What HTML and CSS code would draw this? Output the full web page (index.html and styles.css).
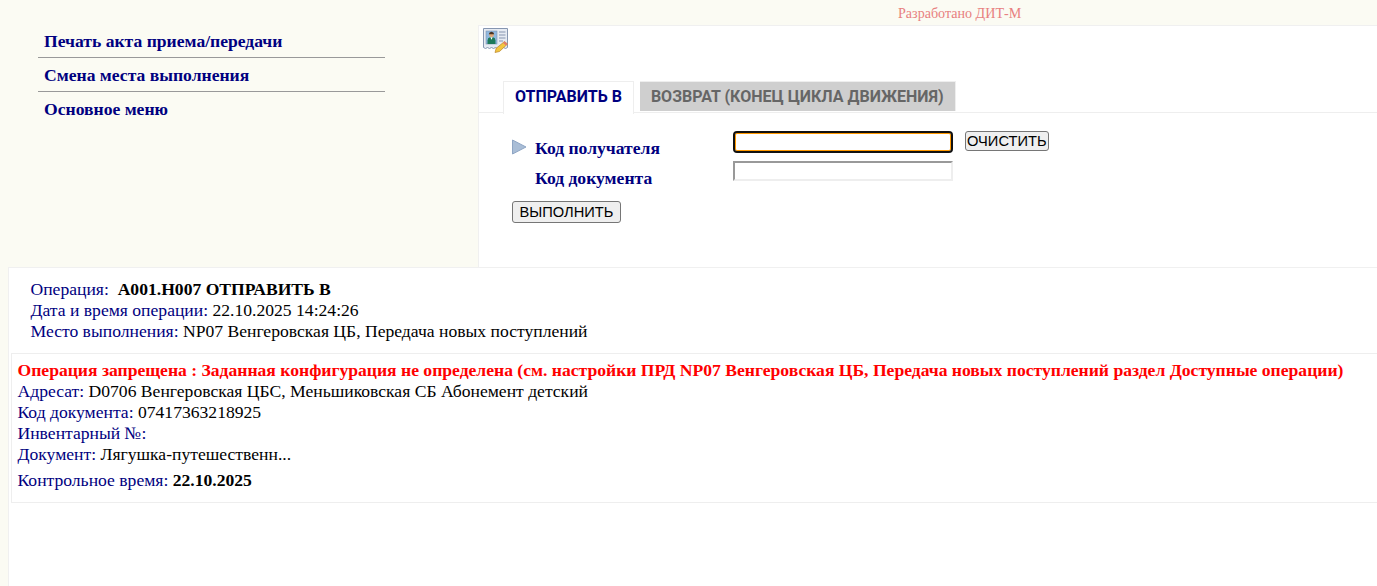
FILE: index.html
```html
<!DOCTYPE html>
<html lang="ru">
<head>
    <meta charset="UTF-8">
    <title>Операция</title>
    <link rel="stylesheet" href="styles.css">
</head>
<body>
    <div class="header"><span class="dev">Разработано ДИТ-М</span></div>
    <div class="top">
        <div class="menu">
            <a class="menu-item" href="#">Печать акта приема/передачи</a>
            <a class="menu-item" href="#">Смена места выполнения</a>
            <a class="menu-item" href="#">Основное меню</a>
        </div>
        <div class="work">
            <svg class="card-icon" width="28" height="26" viewBox="0 0 28 26">
                <path d="M1.500 1.500h24v19l-2 1-2-1-2 1-2-1-2 1-2-1-2 1-2-1-2 1-2-1-2 1-2-1z" fill="#e6ebf3" stroke="#8696b0"/>
                <rect x="4" y="4" width="11" height="13" fill="#8fb8e0" stroke="#7f93b0" stroke-width=".6"/>
                <circle cx="9.500" cy="7.800" r="2.400" fill="#e0a878"/>
                <path d="M9.500 4.800a2.800 2.800 0 0 1 2.700 2.400H6.800a2.800 2.800 0 0 1 2.700-2.400z" fill="#4a3323"/>
                <path d="M5.500 17v-3.500q0-2.800 2.500-3.300h3q2.500.5 2.500 3.300V17z" fill="#1d7a5a"/>
                <path d="M8.300 10.200h2.400l-1.200 2.500z" fill="#fff"/>
                <path d="M17 5h6.500M17 8h6.500M17 11h6.500M17 14h4" stroke="#8696b0" stroke-width="1.200"/>
                <path d="M22.500 14.500l3 2.500-8 7.500-4.500 1 1.200-4.200z" fill="#f3c640" stroke="#b9842a" stroke-width=".7"/>
                <path d="M22.500 14.500l3 2.500-1.500 1.500-3-2.500z" fill="#e57b6e"/>
            </svg>
            <div class="tabs">
                <div class="tab active">ОТПРАВИТЬ В</div>
                <div class="tab">ВОЗВРАТ (КОНЕЦ ЦИКЛА ДВИЖЕНИЯ)</div>
            </div>
            <form class="scan-form">
                <div class="form-grid">
                    <div class="field-label">
                        <svg class="arrow" width="15" height="16" viewBox="0 0 15 16"><path d="M.5 1l13.500 7L.5 15z" fill="#a9bdd6" stroke="#8ea5c4"/></svg>
                        Код получателя
                    </div>
                    <div class="field-input"><input class="text-input focused" type="text"><button class="btn btn-clear" type="button">ОЧИСТИТЬ</button></div>
                    <div class="field-label"><span class="arrow-space"></span>Код документа</div>
                    <div class="field-input"><input class="text-input" type="text"></div>
                </div>
                <button class="btn btn-run" type="button">ВЫПОЛНИТЬ</button>
            </form>
        </div>
    </div>
    <div class="result">
        <div class="op-info">
            <div><span class="lbl">Операция:</span>&nbsp; <b>A001.H007 ОТПРАВИТЬ В</b></div>
            <div><span class="lbl">Дата и время операции:</span> 22.10.2025 14:24:26</div>
            <div><span class="lbl">Место выполнения:</span> NP07 Венгеровская ЦБ, Передача новых поступлений</div>
        </div>
        <div class="op-box">
            <div class="error">Операция запрещена : Заданная конфигурация не определена (см. настройки ПРД NP07 Венгеровская ЦБ, Передача новых поступлений раздел Доступные операции)</div>
            <div><span class="lbl">Адресат:</span> D0706 Венгеровская ЦБС, Меньшиковская СБ Абонемент детский</div>
            <div><span class="lbl">Код документа:</span> 07417363218925</div>
            <div><span class="lbl">Инвентарный №:</span></div>
            <div><span class="lbl">Документ:</span> Лягушка-путешественн...</div>
            <div class="control"><span class="lbl">Контрольное время:</span> <b>22.10.2025</b></div>
        </div>
    </div>
</body>
</html>
```

FILE: styles.css
```css
html, body {
    height: 100%;
}
body {
    margin: 0;
    background-color: #fbfbf3;
    font-family: "Liberation Serif", "Times New Roman", serif;
    font-size: 17.6px;
    color: #000;
    overflow: hidden;
}
.header {
    height: 25px;
    padding-left: 898px;
    box-sizing: border-box;
}
.dev {
    display: block;
    padding-top: 5px;
    font-size: 14.08px;
    line-height: 16px;
    color: #e88080;
}
.top {
    display: flex;
    height: 242px;
}
.menu {
    width: 347px;
    margin: -1px 93px 0 38px;
}
.menu-item {
    display: block;
    height: 34px;
    box-sizing: border-box;
    padding: 7px 0 0 6px;
    line-height: 20px;
    font-weight: bold;
    color: #000080;
    text-decoration: none;
    border-bottom: 1px solid #999;
}
.menu-item:last-child {
    border-bottom: none;
}
.work {
    flex: 1;
    background-color: #fff;
    border-top: 1px solid #f0f0f0;
    border-left: 1px solid #f0f0f0;
}
.card-icon {
    display: block;
    margin: 1px 0 0 3px;
}
.tabs {
    display: flex;
    gap: 6px;
    height: 31px;
    margin-top: 28px;
    padding-left: 24px;
    border-bottom: 1px solid #eee;
}
.tab {
    height: 29px;
    padding: 0 11px;
    background-color: #cfcfcf;
    border-top: 1px solid #eee;
    border-right: 1px solid #eee;
    color: #666;
    font-family: Roboto, "Liberation Sans", Arial, sans-serif;
    font-weight: bold;
    font-size: 16px;
    line-height: 30px;
}
.tab.active {
    height: 32px;
    background-color: #fff;
    border-left: 1px solid #eee;
    color: #000080;
}
.scan-form {
    padding: 18px 0 0 33px;
}
.form-grid {
    display: grid;
    grid-template-columns: 221px auto;
    justify-content: start;
}
.field-label {
    display: flex;
    align-items: center;
    font-weight: bold;
    color: #000080;
    height: 30px;
    padding-top: 5px;
    box-sizing: border-box;
}
.arrow {
    margin: -3px 8px 0 0;
}
.arrow-space {
    width: 23px;
}
.field-input {
    display: flex;
    align-items: flex-start;
    gap: 12px;
    height: 30px;
}
.text-input {
    width: 220px;
    height: 20px;
    padding: 0 2px;
    margin: 0;
    box-sizing: border-box;
    border-style: solid;
    border-width: 2px;
    border-color: #999 #eee #eee #999;
    background-color: #fff;
}
.text-input.focused {
    height: 22px;
    border: 2px solid #111;
    border-radius: 4px;
    box-shadow: inset 0 0 0 1px #f90;
}
.btn {
    padding: 0 1px;
    height: 20px;
    font-family: "Liberation Sans", Arial, sans-serif;
    font-size: 14.67px;
    color: #000;
    background-color: #efefef;
    border: 1px solid #767676;
    border-radius: 3px;
}
.btn-run {
    display: block;
    height: 22px;
    margin-top: 10px;
    padding: 0 6.5px;
}
.result {
    margin-left: 8px;
    height: 319px;
    background-color: #fff;
    border-top: 1px solid #f0f0f0;
    border-left: 1px solid #f0f0f0;
}
.op-info {
    padding: 11px 0 0 21.5px;
    height: 85px;
    box-sizing: border-box;
    line-height: 21px;
}
.lbl {
    color: #000080;
}
.op-box {
    margin-left: 2px;
    height: 150px;
    box-sizing: border-box;
    padding: 6px 0 0 5.5px;
    line-height: 21px;
    border-top: 1px solid #eee;
    border-bottom: 1px solid #eee;
    border-left: 1px solid #eee;
}
.error {
    color: #f00;
    font-weight: bold;
}
.control {
    margin-top: 5px;
}
```
